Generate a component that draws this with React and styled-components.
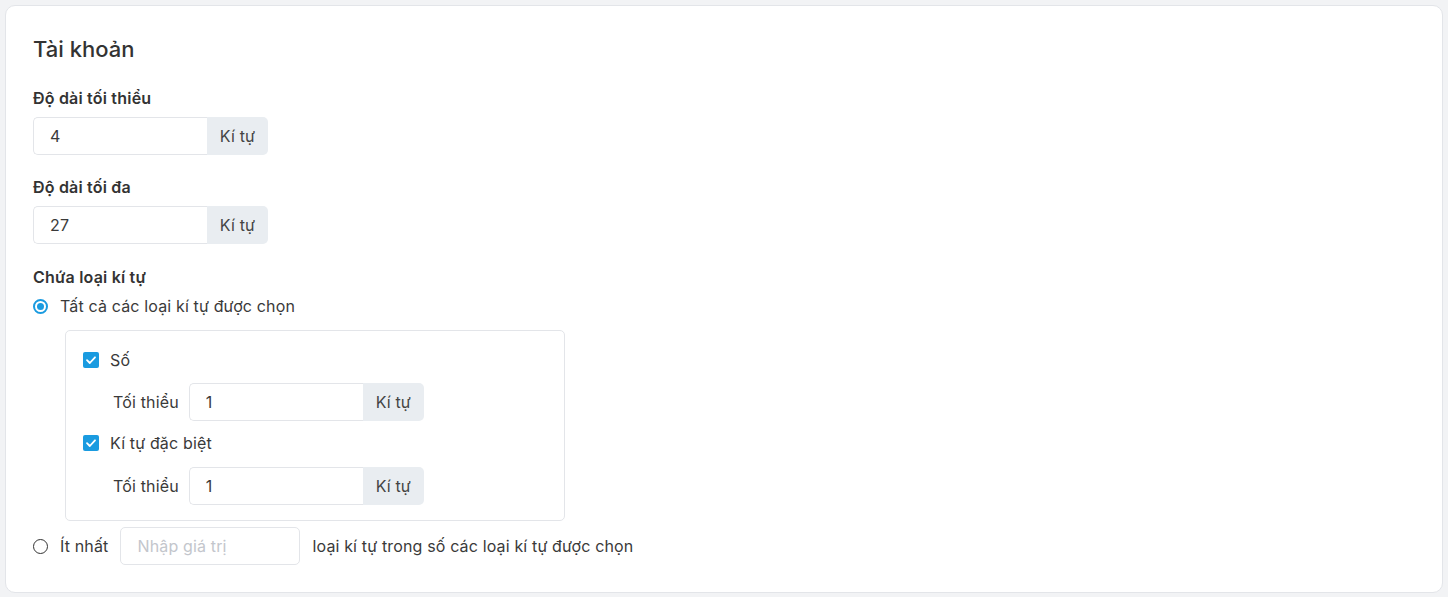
import React from "react";
import styled, { createGlobalStyle } from "styled-components";

const Global = createGlobalStyle`
  html, body { margin: 0; padding: 0; background: #f2f3f5; }
  body { font-family: Inter, "Noto Sans", sans-serif; color: #3a3a3a; }
  * { box-sizing: border-box; }
`;

const Page = styled.div`
  padding: 5px;
`;

const Card = styled.section`
  background: #fff;
  border: 1px solid #e3e5e9;
  border-radius: 10px;
  padding: 28px 27px 27px;
  display: flex;
  flex-direction: column;
`;

const Title = styled.h2`
  margin: 0 0 23px;
  font-size: 22px;
  line-height: 30px;
  font-weight: 500;
  color: #333;
`;

const Field = styled.div`
  display: flex;
  flex-direction: column;
  gap: ${(p) => p.$gap ?? 8}px;
  margin-bottom: ${(p) => p.$mb || 0}px;
`;

const Label = styled.div`
  font-size: 16px;
  line-height: 22px;
  font-weight: 600;
  letter-spacing: 0.2px;
  color: #333;
`;

const Group = styled.div`
  display: flex;
  width: ${(p) => p.$w || 235}px;
  height: 38px;
  flex: none;
`;

const Input = styled.input`
  flex: 1;
  min-width: 0;
  height: 38px;
  border: 1px solid #e3e5e9;
  border-right: ${(p) => (p.$alone ? "1px solid #e3e5e9" : "none")};
  border-radius: ${(p) => (p.$alone ? "5px" : "5px 0 0 5px")};
  padding: 0 16px;
  font-family: inherit;
  font-size: 16px;
  letter-spacing: 0.15px;
  color: #3a3a3a;
  outline: none;
  background: #fff;
  &::placeholder { color: #c3c6cc; }
`;

const Addon = styled.span`
  width: 61px;
  display: flex;
  align-items: center;
  justify-content: center;
  background: #e9edf1;
  border-radius: 0 5px 5px 0;
  font-size: 16px;
  letter-spacing: 0.15px;
  color: #444;
`;

const OptionRow = styled.label`
  display: flex;
  align-items: center;
  gap: 12px;
  font-size: 16px;
  line-height: 22px;
  letter-spacing: 0.15px;
  color: #3a3a3a;
`;

const Radio = styled.span`
  width: 15px;
  height: 15px;
  border-radius: 50%;
  border: ${(p) => (p.$on ? "2px solid #1a9be0" : "1.5px solid #333")};
  display: flex;
  align-items: center;
  justify-content: center;
  flex: none;
  &::after {
    content: "";
    display: ${(p) => (p.$on ? "block" : "none")};
    width: 7px;
    height: 7px;
    border-radius: 50%;
    background: #1a9be0;
  }
`;

const Box = styled.div`
  margin: 13px 0 6px 32px;
  width: 500px;
  border: 1px solid #e3e5e9;
  border-radius: 5px;
  padding: 18px 17px 15px;
  display: flex;
  flex-direction: column;
`;

const CheckRow = styled.label`
  display: flex;
  align-items: center;
  gap: 11px;
  font-size: 16px;
  line-height: 22px;
  letter-spacing: 0.15px;
  color: #3a3a3a;
`;

const Check = styled.span`
  width: 16px;
  height: 16px;
  border-radius: 2px;
  background: #1a9be0;
  display: flex;
  align-items: center;
  justify-content: center;
  flex: none;
`;

const MinRow = styled.div`
  display: flex;
  align-items: center;
  gap: 10px;
  margin: ${(p) => p.$top}px 0 ${(p) => p.$bottom}px 30px;
  font-size: 16px;
  letter-spacing: 0.15px;
  color: #3a3a3a;
`;

const AtLeastRow = styled.div`
  display: flex;
  align-items: center;
  gap: 12px;
  font-size: 16px;
  letter-spacing: 0.15px;
  color: #3a3a3a;
`;

const CheckIcon = () => (
  <svg width="12" height="12" viewBox="0 0 12 12">
    <path d="M2 6.2 L4.8 9 L10 3.3" fill="none" stroke="#fff" strokeWidth="1.8" strokeLinecap="round" strokeLinejoin="round" />
  </svg>
);

const UnitInput = ({ value, w }) => (
  <Group $w={w}>
    <Input defaultValue={value} />
    <Addon>Kí tự</Addon>
  </Group>
);

export default function App() {
  return (
    <>
      <Global />
      <Page>
        <Card>
          <Title>Tài khoản</Title>
          <Field $mb={21}>
            <Label>Độ dài tối thiểu</Label>
            <UnitInput value="4" />
          </Field>
          <Field $mb={22}>
            <Label>Độ dài tối đa</Label>
            <UnitInput value="27" />
          </Field>
          <Field $gap={7}>
            <Label>Chứa loại kí tự</Label>
            <OptionRow>
              <Radio $on />
              Tất cả các loại kí tự được chọn
            </OptionRow>
          </Field>
          <Box>
            <CheckRow>
              <Check><CheckIcon /></Check>
              Số
            </CheckRow>
            <MinRow $top={12} $bottom={11}>
              <span>Tối thiểu</span>
              <UnitInput value="1" />
            </MinRow>
            <CheckRow>
              <Check><CheckIcon /></Check>
              Kí tự đặc biệt
            </CheckRow>
            <MinRow $top={13} $bottom={0}>
              <span>Tối thiểu</span>
              <UnitInput value="1" />
            </MinRow>
          </Box>
          <AtLeastRow>
            <OptionRow>
              <Radio />
              Ít nhất
            </OptionRow>
            <Group $w={180}>
              <Input $alone placeholder="Nhập giá trị" />
            </Group>
            <span>loại kí tự trong số các loại kí tự được chọn</span>
          </AtLeastRow>
        </Card>
      </Page>
    </>
  );
}
